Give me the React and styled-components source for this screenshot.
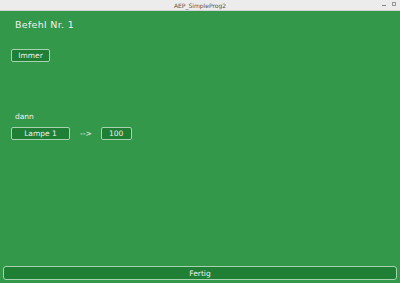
import styled, { createGlobalStyle } from "styled-components";

const Global = createGlobalStyle`
    html, body {
        margin: 0;
        padding: 0;
        width: 400px;
        height: 283px;
        overflow: hidden;
        font-family: "DejaVu Sans", "Liberation Sans", sans-serif;
    }
`;

function App() {
    return (
        <Window>
            <Global />
            <TitleBar>
                <Title>AEP_SimpleProg2</Title>
                <WinButtons>
                    <MinBtn />
                    <MaxBtn />
                </WinButtons>
            </TitleBar>
            <Content>
                <Heading>Befehl Nr. 1</Heading>
                <Row top={18}>
                    <Field width={39}>Immer</Field>
                </Row>
                <Label>dann</Label>
                <Row>
                    <Field width={59}>Lampe 1</Field>
                    <Arrow>--&gt;</Arrow>
                    <Field width={31}>100</Field>
                </Row>
                <Spacer />
                <DoneBtn>Fertig</DoneBtn>
            </Content>
        </Window>
    );
}

const Window = styled.div`
    width: 400px;
    height: 283px;
    display: flex;
    flex-direction: column;
    background-color: #33984a;
`;

const TitleBar = styled.div`
    height: 10px;
    flex-shrink: 0;
    background-color: #ececec;
    border-bottom: 1px solid #d4d4d4;
    position: relative;
    display: flex;
    justify-content: center;
    align-items: center;
`;

const Title = styled.span`
    font-size: 6px;
    color: #555;
`;

const WinButtons = styled.div`
    position: absolute;
    right: 4px;
    top: 2px;
    display: flex;
    gap: 6px;
    align-items: center;
`;

const MinBtn = styled.span`
    width: 4px;
    height: 1px;
    background-color: #888;
    margin-top: 2px;
`;

const MaxBtn = styled.span`
    width: 4px;
    height: 4px;
    border: 1px solid #999;
    box-sizing: border-box;
`;

const Content = styled.div`
    flex: 1;
    display: flex;
    flex-direction: column;
    padding: 0 3px 3px 3px;
`;

const Heading = styled.div`
    margin: 8px 0 0 12px;
    font-size: 9.5px;
    color: #f0f0f0;
    height: 12px;
    line-height: 12px;
    letter-spacing: 0.3px;
`;

const Row = styled.div`
    display: flex;
    align-items: center;
    margin-left: 8px;
    margin-top: ${(p) => p.top || 0}px;
`;

const Field = styled.div`
    width: ${(p) => p.width}px;
    height: 13px;
    box-sizing: border-box;
    border: 1px solid #a9d2ae;
    border-radius: 2px;
    background-color: #1f7f34;
    color: #f0f0f0;
    font-size: 7.5px;
    display: flex;
    align-items: center;
    justify-content: center;
`;

const Arrow = styled.span`
    color: #f0f0f0;
    font-size: 7.5px;
    margin: 0 9px 0 10px;
`;

const Label = styled.div`
    margin: 50px 0 5px 12px;
    font-size: 7.5px;
    color: #f0f0f0;
    height: 10px;
    line-height: 10px;
`;

const Spacer = styled.div`
    flex: 1;
`;

const DoneBtn = styled.button`
    height: 14px;
    box-sizing: border-box;
    border: 1px solid #a9d2ae;
    border-radius: 3px;
    background-color: #1f7f34;
    color: #f0f0f0;
    font-family: "DejaVu Sans", sans-serif;
    font-size: 7.5px;
    padding: 0;
`;

export default App;
